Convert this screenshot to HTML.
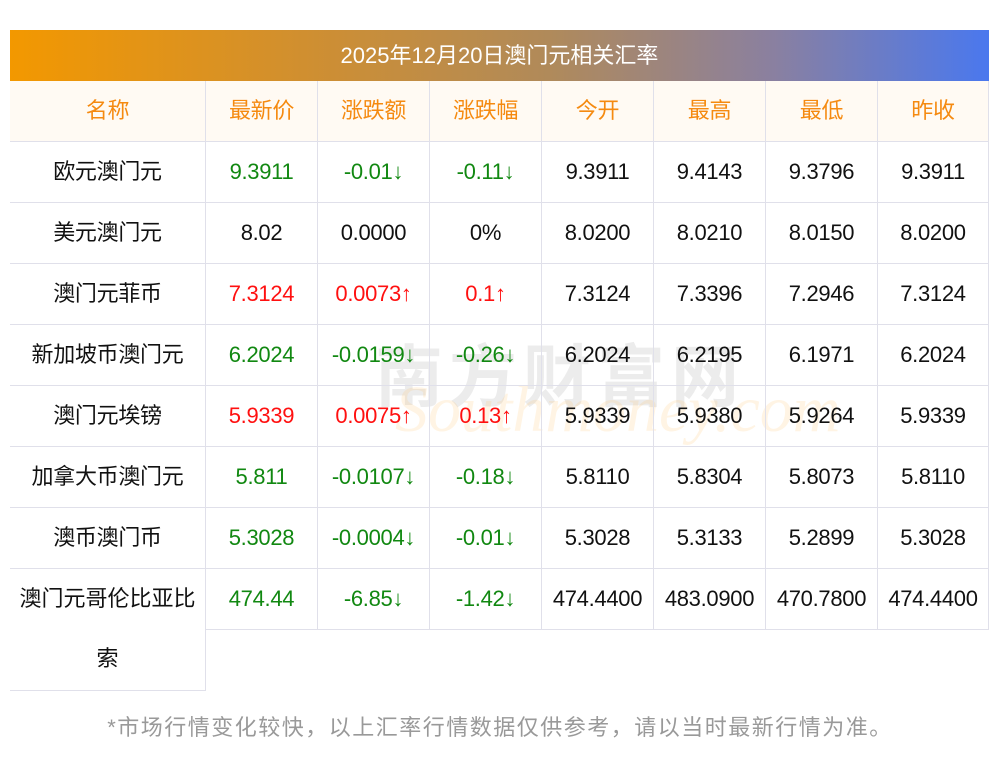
<!DOCTYPE html>
<html><head><meta charset="utf-8"><style>
body{margin:0;width:1000px;height:757px;background:#fff;position:relative;overflow:hidden;font-family:"Liberation Sans","Noto Sans CJK SC",sans-serif;}
.bar{position:absolute;left:10px;top:30px;width:979px;height:51px;background:linear-gradient(90deg,#f39800,#d08f30 30%,#b08a5a 55%,#8a80a0 78%,#4a78ee);color:#fff;font-size:22px;line-height:51px;text-align:center;}
.row{position:absolute;left:10px;width:979px;height:61px;border-bottom:1px solid #e0e0ea;box-sizing:border-box;display:flex;}
.row div{width:112px;border-left:1px solid #e0e0ea;box-sizing:border-box;text-align:center;line-height:60px;font-size:22px;color:#111;white-space:nowrap;letter-spacing:-0.3px;}
.row div:first-child{width:195px;border-left:none;}
.row div:last-child{border-right:1px solid #e0e0ea;}
.hd{background:#fffaf3;}
.hd div{color:#f58a10;}
.g{color:#118811!important}.r{color:#ff1010!important}
.wm{position:absolute;left:375px;top:322px;font-size:68px;font-weight:bold;color:rgba(150,150,150,0.18);letter-spacing:6px;font-family:"Noto Sans CJK SC",sans-serif;}
.wm2{position:absolute;left:395px;top:372px;font-size:66px;font-style:italic;color:rgba(255,200,120,0.2);font-family:"Liberation Serif",serif;}
.foot{position:absolute;left:0;width:1000px;top:710px;text-align:center;font-size:22px;color:#999;letter-spacing:1.5px;}
</style></head><body>
<div class="bar">2025年12月20日澳门元相关汇率</div>
<div class="wm">南方财富网</div>
<div class="wm2">Southmoney.com</div>
<div class="row hd" style="top:81px"><div>名称</div><div>最新价</div><div>涨跌额</div><div>涨跌幅</div><div>今开</div><div>最高</div><div>最低</div><div>昨收</div></div>
<div class="row" style="top:142px"><div>欧元澳门元</div><div class="g">9.3911</div><div class="g">-0.01↓</div><div class="g">-0.11↓</div><div>9.3911</div><div>9.4143</div><div>9.3796</div><div>9.3911</div></div>
<div class="row" style="top:203px"><div>美元澳门元</div><div>8.02</div><div>0.0000</div><div>0%</div><div>8.0200</div><div>8.0210</div><div>8.0150</div><div>8.0200</div></div>
<div class="row" style="top:264px"><div>澳门元菲币</div><div class="r">7.3124</div><div class="r">0.0073↑</div><div class="r">0.1↑</div><div>7.3124</div><div>7.3396</div><div>7.2946</div><div>7.3124</div></div>
<div class="row" style="top:325px"><div>新加坡币澳门元</div><div class="g">6.2024</div><div class="g">-0.0159↓</div><div class="g">-0.26↓</div><div>6.2024</div><div>6.2195</div><div>6.1971</div><div>6.2024</div></div>
<div class="row" style="top:386px"><div>澳门元埃镑</div><div class="r">5.9339</div><div class="r">0.0075↑</div><div class="r">0.13↑</div><div>5.9339</div><div>5.9380</div><div>5.9264</div><div>5.9339</div></div>
<div class="row" style="top:447px"><div>加拿大币澳门元</div><div class="g">5.811</div><div class="g">-0.0107↓</div><div class="g">-0.18↓</div><div>5.8110</div><div>5.8304</div><div>5.8073</div><div>5.8110</div></div>
<div class="row" style="top:508px"><div>澳币澳门币</div><div class="g">5.3028</div><div class="g">-0.0004↓</div><div class="g">-0.01↓</div><div>5.3028</div><div>5.3133</div><div>5.2899</div><div>5.3028</div></div>
<div class="row" style="top:569px"><div style="border:none"></div><div class="g">474.44</div><div class="g">-6.85↓</div><div class="g">-1.42↓</div><div>474.4400</div><div>483.0900</div><div>470.7800</div><div>474.4400</div></div>
<div style="position:absolute;left:10px;top:569px;width:196px;height:122px;border-bottom:1px solid #e0e0ea;border-right:1px solid #e0e0ea;box-sizing:border-box;background:#fff;text-align:center;font-size:22px;line-height:60px;color:#111;">澳门元哥伦比亚比<br>索</div>
<div class="foot">*市场行情变化较快，以上汇率行情数据仅供参考，请以当时最新行情为准。</div>
</body></html>
